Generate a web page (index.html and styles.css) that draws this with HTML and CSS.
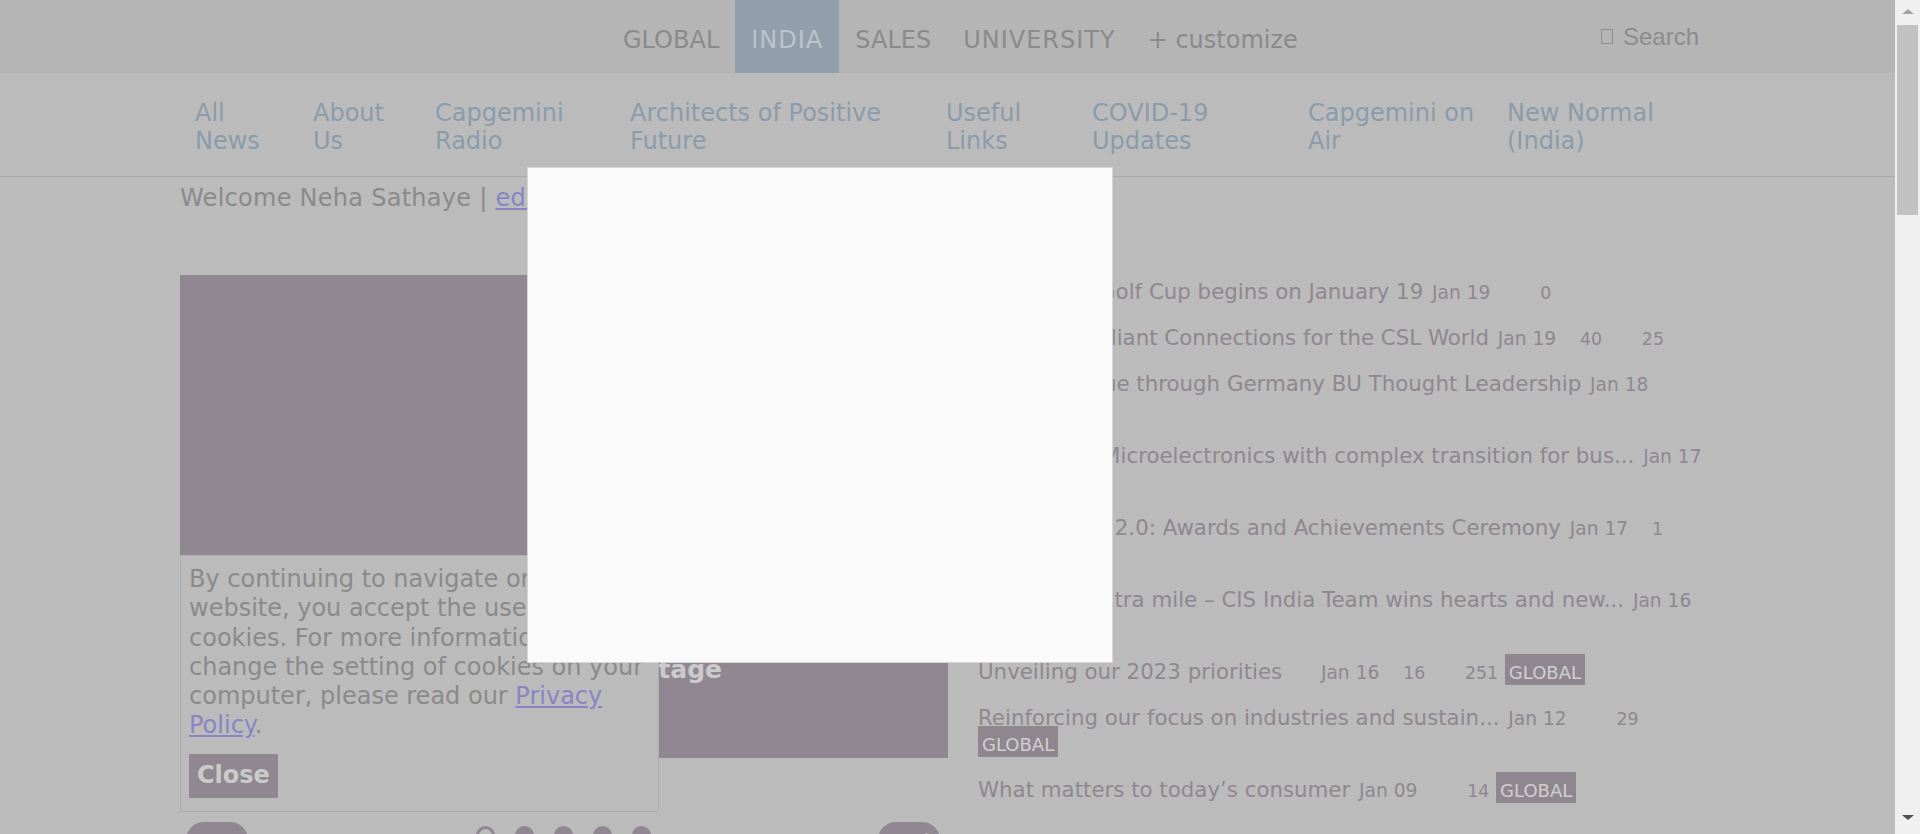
FILE: index.html
```html
<!DOCTYPE html>
<html lang="en">
<head>
<meta charset="utf-8">
<title>Capgemini Intranet – India</title>
<link rel="stylesheet" href="styles.css">
</head>
<body>
<div class="viewport">
  <div class="page">
    <header class="topbar">
      <div class="container topbar-inner">
        <nav class="tabs">
          <a class="tab" href="#">GLOBAL</a>
          <a class="tab tab-wide tab-active" href="#">INDIA</a>
          <a class="tab" href="#">SALES</a>
          <a class="tab tab-wide" href="#">UNIVERSITY</a>
          <a class="tab" href="#">+ customize</a>
        </nav>
        <div class="search">
          <svg class="search-icon" width="14" height="17" viewBox="0 0 14 17"><rect x="1.5" y="1.5" width="11" height="14" fill="none" stroke="#8f8f8f" stroke-width="1"/></svg>
          <span>Search</span>
        </div>
      </div>
    </header>

    <nav class="subnav">
      <ul class="container subnav-list">
        <li><a href="#">All News</a></li>
        <li><a href="#">About Us</a></li>
        <li><a href="#">Capgemini Radio</a></li>
        <li><a href="#">Architects of Positive Future</a></li>
        <li><a href="#">Useful Links</a></li>
        <li><a href="#">COVID-19 Updates</a></li>
        <li><a href="#">Capgemini on Air</a></li>
        <li><a href="#">New Normal (India)</a></li>
      </ul>
    </nav>

    <main class="container content">
      <p class="welcome">Welcome Neha Sathaye | <a href="#">edit profile</a></p>
      <div class="columns">
        <section class="carousel">
          <div class="slide">
            <p class="slide-caption">The Capgemini Advantage</p>
          </div>
          <div class="pager">
            <a class="pill" href="#">prev</a>
            <div class="dots">
              <span class="dot dot-current"></span>
              <span class="dot"></span>
              <span class="dot"></span>
              <span class="dot"></span>
              <span class="dot"></span>
            </div>
            <a class="pill" href="#">next</a>
          </div>
        </section>

        <section class="news">
          <ul class="news-list">
            <li class="news-item">Capgemini Golf Cup begins on January 19 <span class="date">Jan 19</span> <span class="cnt likes solo">0</span></li>
            <li class="news-item">Creating Brilliant Connections for the CSL World <span class="date">Jan 19</span> <span class="cnt comments">40</span> <span class="cnt likes">25</span></li>
            <li class="news-item">Building value through Germany BU Thought Leadership <span class="date">Jan 18</span> <span class="cnt likes solo">12</span></li>
            <li class="news-item">Supporting Microelectronics with complex transition for bus... <span class="date">Jan 17</span> <span class="cnt likes solo">9</span></li>
            <li class="news-item">Shining Star 2.0: Awards and Achievements Ceremony <span class="date">Jan 17</span> <span class="cnt comments">1</span> <span class="cnt likes">14</span></li>
            <li class="news-item">Going the extra mile – CIS India Team wins hearts and new... <span class="date">Jan 16</span> <span class="cnt likes solo">23</span></li>
            <li class="news-item">Unveiling our 2023 priorities <span class="date date-wide">Jan 16</span> <span class="cnt comments">16</span> <span class="cnt likes">251</span> <span class="badge">GLOBAL</span></li>
            <li class="news-item">Reinforcing our focus on industries and sustain... <span class="date">Jan 12</span> <span class="cnt likes solo">29</span> <span class="badge">GLOBAL</span></li>
            <li class="news-item">What matters to today’s consumer <span class="date">Jan 09</span> <span class="cnt likes solo">14</span> <span class="badge">GLOBAL</span></li>
          </ul>
        </section>
      </div>
    </main>
  </div>

  <div class="scrollbar">
    <div class="sb-button"><span class="sb-arrow sb-up"></span></div>
    <div class="sb-track"><div class="sb-thumb"></div></div>
    <div class="sb-button"><span class="sb-arrow sb-down"></span></div>
  </div>
</div>

<div class="cookie">
  <p class="cookie-text">By continuing to navigate on this website, you accept the use of cookies. For more information and to change the setting of cookies on your computer, please read our <a href="#">Privacy Policy</a>.</p>
  <button class="cookie-close" type="button">Close</button>
</div>

<div class="modal"></div>
</body>
</html>
```

FILE: styles.css
```css
* { box-sizing: border-box; }

html, body {
  margin: 0;
  height: 100%;
  overflow: hidden;
}

body {
  font-family: "DejaVu Sans", Verdana, sans-serif;
  background: #bbbbbb;
  color: #8a8a8a;
}

a { text-decoration: none; }

.viewport {
  display: flex;
  height: 834px;
}

.page {
  flex: 1;
  min-width: 0;
  height: 834px;
  overflow: hidden;
}

.container {
  width: 1535px;
  margin: 0 auto;
}

/* ---------- top bar ---------- */
.topbar {
  background: #b5b5b5;
  height: 73px;
}

.topbar-inner {
  display: flex;
  align-items: center;
  height: 100%;
}

.tabs {
  display: flex;
  height: 100%;
  margin-left: 427px;
}

.tab {
  display: block;
  padding: 5px 16px 0;
  line-height: 70px;
  font-size: 24px;
  color: #8a8a8a;
}

.tab-wide { letter-spacing: 1px; }

.tab-active {
  background: #909fab;
  color: #bdc3c8;
}

.search {
  margin-left: auto;
  margin-right: 16px;
  display: flex;
  align-items: center;
  gap: 9px;
  font-family: "Liberation Sans", Arial, sans-serif;
  font-size: 24px;
  color: #8c8c8c;
}

.search-icon { display: block; }

/* ---------- sub navigation ---------- */
.subnav {
  border-bottom: 1px solid #a9a9a9;
}

.subnav-list {
  list-style: none;
  margin: 0 auto;
  padding: 26px 0 21px 15px;
  display: grid;
  grid-template-columns: 118px 122px 195px 316px 146px 216px 199px auto;
}

.subnav-list a {
  display: block;
  padding-right: 27px;
  font-size: 24px;
  line-height: 28px;
  color: #8a9cab;
}

/* ---------- content ---------- */
.welcome {
  margin: 7px 0 0;
  font-size: 24px;
  line-height: 28px;
  letter-spacing: 0.27px;
  color: #8a8a8a;
}

.welcome a {
  color: #8a84c4;
  text-decoration: underline;
}

.columns {
  display: grid;
  grid-template-columns: 768px 737px;
  column-gap: 30px;
  margin-top: 63px;
}

/* carousel */
.slide {
  position: relative;
  height: 483px;
  background: #918792;
}

.slide-caption {
  position: absolute;
  left: 172px;
  top: 380px;
  margin: 0;
  font-size: 25px;
  font-weight: 700;
  line-height: 30px;
  color: #cbcbcb;
  white-space: nowrap;
}

.pager {
  display: flex;
  justify-content: space-between;
  align-items: flex-start;
  margin-top: 64px;
  padding: 0 8px 0 6px;
}

.pill {
  display: block;
  width: 62px;
  height: 36px;
  border-radius: 18px;
  background: #908792;
  color: #cbcbcb;
  font-size: 18px;
  font-weight: 700;
  line-height: 36px;
  text-align: center;
}

.dots {
  display: flex;
  gap: 20px;
  margin-top: 4px;
}

.dot {
  width: 19px;
  height: 19px;
  border-radius: 50%;
  background: #908792;
}

.dot-current {
  background: transparent;
  border: 3px solid #908792;
}

/* news list */
.news-list {
  list-style: none;
  margin: 0;
  padding: 4px 0 0;
}

.news-item {
  font-size: 21.33px;
  line-height: 26px;
  margin-bottom: 20px;
  color: #8f878f;
}

.date {
  margin-left: 2px;
  font-size: 18.67px;
  line-height: 1;
}

.date-wide { margin-left: 32px; }

.cnt {
  font-size: 17.33px;
  line-height: 1;
}

.comments { margin-left: 17px; }
.likes { margin-left: 33px; }
.likes.solo { margin-left: 43px; }

.badge {
  padding: 8px 4px 2px;
  background: #908690;
  color: #cfcfcf;
  font-size: 18px;
  line-height: 1;
}

/* ---------- fake window scrollbar ---------- */
.scrollbar {
  width: 25px;
  flex: none;
  height: 834px;
  background: #f0f0f0;
  display: flex;
  flex-direction: column;
}

.sb-button {
  height: 25px;
  display: flex;
  align-items: center;
  justify-content: center;
}

.sb-track {
  flex: 1;
  padding: 0 2px;
}

.sb-thumb {
  height: 190px;
  background: #c1c1c1;
}

.sb-arrow {
  width: 0;
  height: 0;
  border-left: 6px solid transparent;
  border-right: 6px solid transparent;
}

.sb-up {
  border-bottom: 5px solid #a3a3a3;
  margin-top: -3px;
}

.sb-down {
  border-top: 5px solid #505050;
  margin-top: -8px;
}

/* ---------- cookie notice ---------- */
.cookie {
  position: fixed;
  left: 180px;
  top: 555px;
  width: 479px;
  height: 257px;
  padding: 9px 8px 14px;
  background: #bbbbbb;
  border: 1px solid #aeaeae;
}

.cookie-text {
  margin: 0;
  font-size: 24px;
  line-height: 29.3px;
  color: #8a8a8a;
}

.cookie-text a {
  color: #8a84c4;
  text-decoration: underline;
}

.cookie-close {
  display: block;
  margin-top: 13px;
  padding: 7px 8px 8px;
  border: none;
  background: #908792;
  color: #cacaca;
  font-family: "DejaVu Sans", Verdana, sans-serif;
  font-size: 24px;
  font-weight: 700;
  line-height: 29px;
}

/* ---------- modal dialog ---------- */
.modal {
  position: fixed;
  left: 527px;
  top: 167px;
  width: 586px;
  height: 496px;
  background: #fafafa;
  border: 1px solid #d6d6d6;
}
```
